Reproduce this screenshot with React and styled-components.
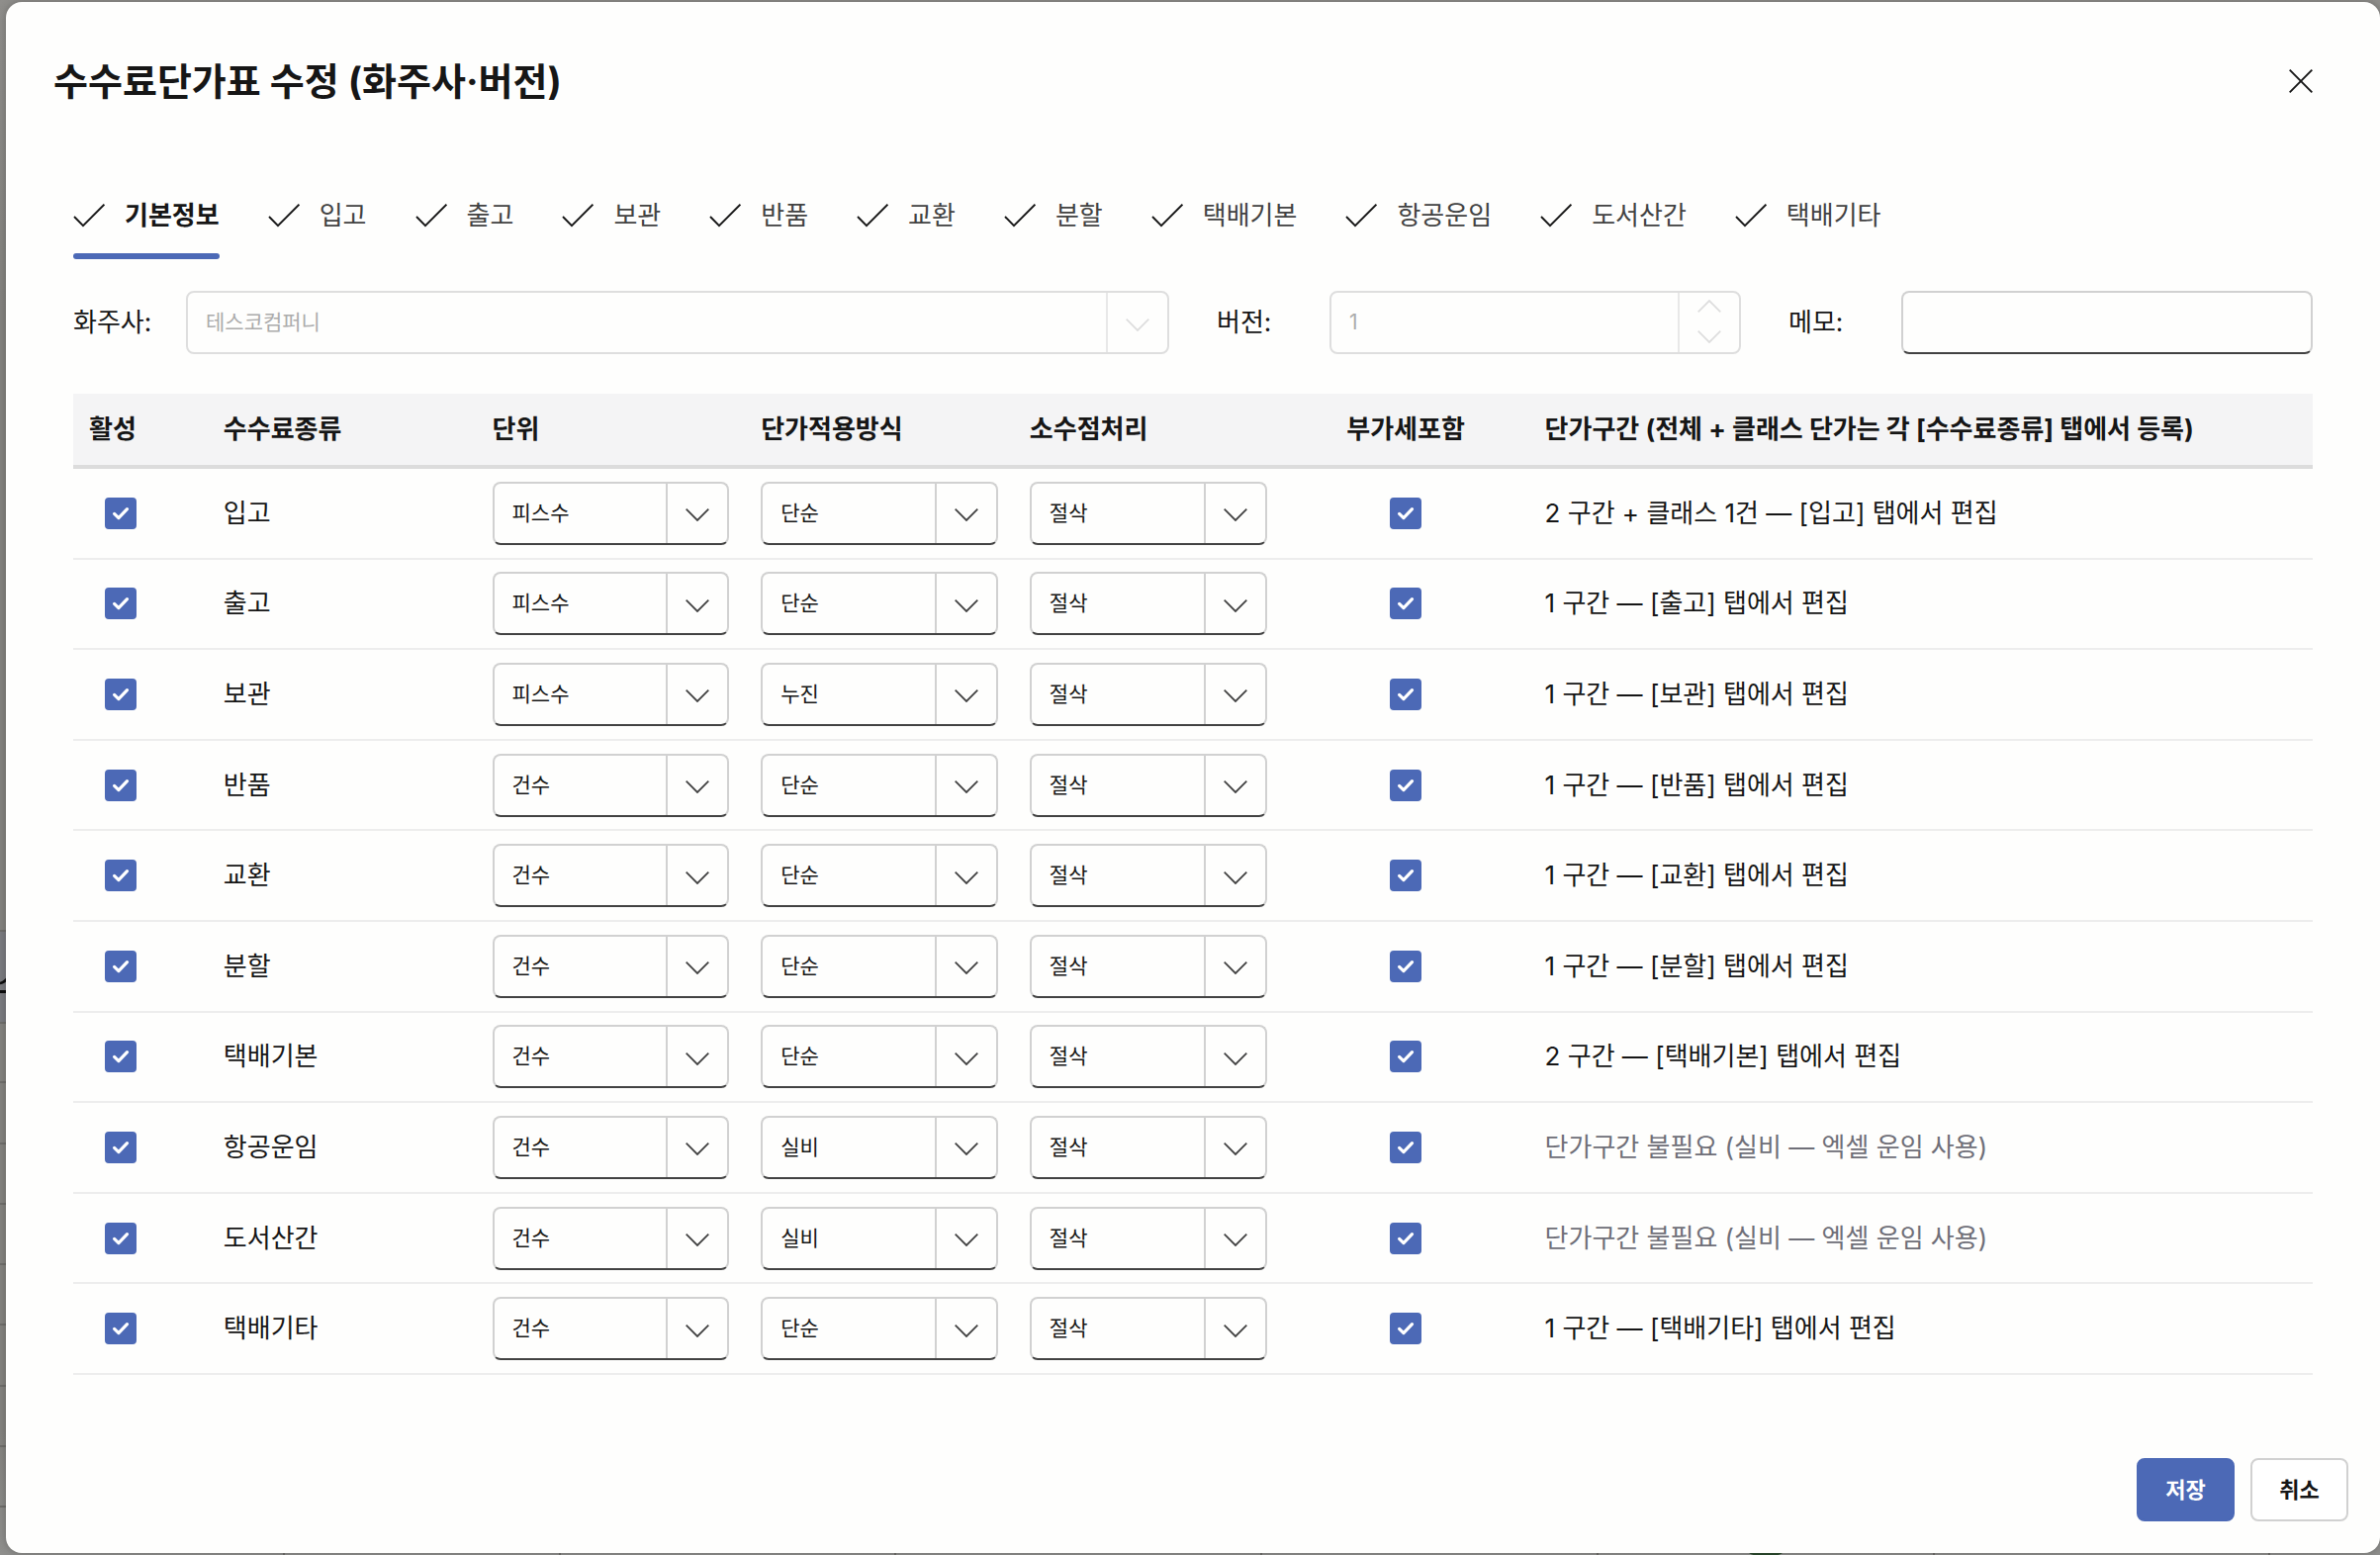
import React, { useState } from 'react';
import styled, { createGlobalStyle } from 'styled-components';

const GlobalStyle = createGlobalStyle`
    * {
        box-sizing: border-box;
    }
    body {
        margin: 0;
        background: #868583;
        color: #161616;
        font-family: Inter, 'Noto Sans CJK KR', sans-serif;
        font-size: 26px;
        line-height: 40px;
    }
    button, input, select {
        font: inherit;
        color: inherit;
        margin: 0;
    }
`;

const Backdrop = styled.div`
    position: relative;
    display: flex;
    min-height: 100vh;
    padding: 2px 0 2px 6px;
    background: linear-gradient(#8f8e8b, #84837f 20%, #84837f 92%, #8f8f8d);
`;

/* dimmed list page that shows around the edges of the dialog */
const BehindPage = styled.svg`
    position: absolute;
    inset: 0;
    width: 100%;
    height: 100%;
`;

const Dialog = styled.section`
    position: relative;
    flex: 1;
    min-width: 0;
    display: flex;
    flex-direction: column;
    border-radius: 16px;
    background: #fefefd;
    box-shadow: 0 0 8px rgba(0, 0, 0, 0.25);
`;

const Header = styled.header`
    display: flex;
    align-items: center;
    justify-content: space-between;
    padding: 48px 60px 0 48px;
`;

const Title = styled.h1`
    margin: 0;
    font-size: 38px;
    line-height: 64px;
    font-weight: 700;
`;

const IconButton = styled.button`
    display: flex;
    padding: 8px;
    border: 0;
    background: none;
    cursor: pointer;
`;

const Content = styled.div`
    flex: 1;
    display: flex;
    flex-direction: column;
    padding: 72px 68px 84px;
`;

const TabList = styled.div`
    display: flex;
    gap: 49px;
`;

const TabItem = styled.div`
    display: flex;
    flex-direction: column;
    &::after {
        content: '';
        height: 6px;
        border-radius: 3px;
        background: ${({ $active }) => ($active ? '#4c69b6' : 'transparent')};
    }
`;

const Tab = styled.button`
    display: flex;
    align-items: center;
    gap: 20px;
    height: 70px;
    padding: 0 0 6px;
    border: 0;
    background: none;
    color: ${({ $active }) => ($active ? '#161616' : '#424242')};
    font-weight: ${({ $active }) => ($active ? 700 : 400)};
    cursor: pointer;
`;

const Form = styled.div`
    display: grid;
    grid-template-columns: repeat(4, minmax(0, 1fr));
    gap: 48px;
    padding: 32px 0 40px;
`;

const Field = styled.div`
    grid-column: span ${({ $span }) => $span || 1};
    display: flex;
    align-items: center;
`;

const Label = styled.label`
    flex: 0 0 114px;
`;

const Box = styled.div`
    flex: 1;
    min-width: 0;
    display: grid;
    grid-template-columns: minmax(0, 1fr) 62px;
    height: 64px;
    border: 2px solid ${({ $disabled }) => ($disabled ? '#dedede' : '#d1d1d1')};
    border-bottom-color: ${({ $disabled }) => ($disabled ? '#dedede' : '#424242')};
    border-radius: 8px;
    overflow: hidden;
    font-size: 21px;
    color: ${({ $disabled }) => ($disabled ? '#acacac' : '#161616')};
`;

const Select = styled.select`
    grid-area: 1 / 1 / 2 / 3;
    appearance: none;
    width: 100%;
    padding: 0 80px 0 18px;
    border: 0;
    background: none;
    opacity: 1;
    outline-offset: -2px;
`;

const Addon = styled.span`
    grid-area: 1 / 2 / 2 / 3;
    display: flex;
    flex-direction: column;
    align-items: center;
    justify-content: center;
    gap: 18px;
    padding: ${({ $spinner }) => ($spinner ? '0 0 2px' : '4px 0 0')};
    border-left: 2px solid ${({ $disabled }) => ($disabled ? '#e8e8e8' : '#d1d1d1')};
    color: ${({ $disabled }) => ($disabled ? '#dedede' : '#424242')};
    pointer-events: none;
`;

const Input = styled.input`
    grid-column: ${({ $wide }) => ($wide ? '1 / 3' : '1 / 2')};
    width: 100%;
    padding: 0 18px;
    border: 0;
    background: none;
    outline-offset: -2px;
`;

const Table = styled.table`
    flex: 1;
    width: 100%;
    table-layout: fixed;
    border-collapse: separate;
    border-spacing: 0;
`;

const Th = styled.th`
    width: ${({ $width }) => $width};
    height: 76px;
    padding: 0 16px;
    border-bottom: 4px solid #dcdcdc;
    background: #f4f4f5;
    text-align: ${({ $center }) => ($center ? 'center' : 'left')};
    font-weight: 700;
    white-space: nowrap;
`;

const Td = styled.td`
    height: 91px;
    padding: 0 16px;
    border-bottom: 2px solid #ededed;
    color: ${({ $muted }) => ($muted ? '#6f6f78' : '#161616')};
`;

const CheckCell = styled(Td)`
    padding: 0 ${({ $center }) => ($center ? '16px' : '32px')};
    text-align: ${({ $center }) => ($center ? 'center' : 'left')};
`;

const CheckWrap = styled.label`
    display: grid;
    justify-content: ${({ $center }) => ($center ? 'center' : 'start')};
    color: #ffffff;
    & > * {
        grid-area: 1 / 1;
    }
    & > svg {
        pointer-events: none;
    }
`;

const CheckInput = styled.input`
    appearance: none;
    width: 32px;
    height: 32px;
    border: 2px solid #d1d1d1;
    border-radius: 4px;
    &:checked {
        border-color: #4c69b6;
        background: #4c69b6;
    }
`;

const Footer = styled.footer`
    display: flex;
    justify-content: flex-end;
    gap: 16px;
    padding: 0 32px 32px;
`;

const Button = styled.button`
    min-width: 99px;
    height: 64px;
    padding: 0 24px;
    border: 2px solid ${({ $primary }) => ($primary ? '#4c69b6' : '#d1d1d1')};
    border-radius: 8px;
    background: ${({ $primary }) => ($primary ? '#4c69b6' : '#ffffff')};
    color: ${({ $primary }) => ($primary ? '#ffffff' : '#161616')};
    font-size: 22px;
    font-weight: 700;
    cursor: pointer;
`;

const Chevron = ({ up }) => (
    <svg width='24' height='13' viewBox='0 0 24 13' fill='none' stroke='currentColor' strokeWidth='1.8'>
        <path d={up ? 'M.7 12.3 12 1l11.3 11.3' : 'M.7.7 12 12 23.3.7'} />
    </svg>
);

const TabCheck = () => (
    <svg width='32' height='24' viewBox='0 0 32 24' fill='none' stroke='#161616' strokeWidth='1.9'>
        <path d='M1 13l9 9.2L31.4.7' />
    </svg>
);

const tabs = ['기본정보', '입고', '출고', '보관', '반품', '교환', '분할', '택배기본', '항공운임', '도서산간', '택배기타'];

const rows = [
    { name: '입고', unit: '피스수', method: '단순', range: '2 구간 + 클래스 1건 — [입고] 탭에서 편집' },
    { name: '출고', unit: '피스수', method: '단순', range: '1 구간 — [출고] 탭에서 편집' },
    { name: '보관', unit: '피스수', method: '누진', range: '1 구간 — [보관] 탭에서 편집' },
    { name: '반품', unit: '건수', method: '단순', range: '1 구간 — [반품] 탭에서 편집' },
    { name: '교환', unit: '건수', method: '단순', range: '1 구간 — [교환] 탭에서 편집' },
    { name: '분할', unit: '건수', method: '단순', range: '1 구간 — [분할] 탭에서 편집' },
    { name: '택배기본', unit: '건수', method: '단순', range: '2 구간 — [택배기본] 탭에서 편집' },
    { name: '항공운임', unit: '건수', method: '실비', range: '단가구간 불필요 (실비 — 엑셀 운임 사용)', muted: true },
    { name: '도서산간', unit: '건수', method: '실비', range: '단가구간 불필요 (실비 — 엑셀 운임 사용)', muted: true },
    { name: '택배기타', unit: '건수', method: '단순', range: '1 구간 — [택배기타] 탭에서 편집' },
];

const rowLines = [940, 1033, 1093, 1155, 1216, 1277, 1338, 1400, 1461, 1522];
const columnLines = [286, 565, 904, 1274, 1614, 1954, 2293];

const Behind = () => (
    <BehindPage aria-hidden='true'>
        <rect y='941' width='8' height='92' fill='#7b7c80' />
        {rowLines.map((y) => (
            <rect key={y} y={y} width='8' height='2' fill='#6f6e6b' />
        ))}
        {columnLines.map((x) => (
            <rect key={x} x={x} y='1560' width='2' height='12' fill='#6f6e6b' />
        ))}
        <path d='M0 994q5-1 8-6' fill='none' stroke='#0c0c0c' strokeWidth='2.5' />
        <rect y='1001' width='8' height='3' fill='#0c0c0c' />
        <ellipse cx='1785' cy='1560' rx='24' ry='14' fill='#2a4a2c' />
    </BehindPage>
);

const Dropdown = ({ id, label, value, options, disabled }) => (
    <Box $disabled={disabled}>
        <Select id={id} aria-label={label} defaultValue={value} disabled={disabled}>
            {options.map((option) => (
                <option key={option}>{option}</option>
            ))}
        </Select>
        <Addon $disabled={disabled}>
            <Chevron />
        </Addon>
    </Box>
);

const Checkbox = ({ label, center }) => (
    <CheckWrap $center={center}>
        <CheckInput type='checkbox' aria-label={label} defaultChecked />
        <svg width='32' height='32' viewBox='0 0 32 32' fill='none' stroke='currentColor' strokeWidth='3.2' strokeLinecap='round' strokeLinejoin='round'>
            <path d='M9.6 16.4l4.3 4.2 8.6-9' />
        </svg>
    </CheckWrap>
);

const App = () => {
    const [active, setActive] = useState(tabs[0]);

    return (
        <>
            <GlobalStyle />
            <Backdrop>
                <Behind />
                <Dialog role='dialog' aria-labelledby='dialog-title'>
                    <Header>
                        <Title id='dialog-title'>수수료단가표 수정 (화주사·버전)</Title>
                        <IconButton aria-label='닫기'>
                            <svg width='24' height='24' viewBox='0 0 24 24' stroke='#161616' strokeWidth='1.9'>
                                <path d='M.7.7l22.6 22.6M23.3.7L.7 23.3' />
                            </svg>
                        </IconButton>
                    </Header>
                    <Content>
                        <TabList role='tablist'>
                            {tabs.map((tab) => (
                                <TabItem key={tab} $active={tab === active}>
                                    <Tab role='tab' aria-selected={tab === active} $active={tab === active} onClick={() => setActive(tab)}>
                                        <TabCheck />
                                        {tab}
                                    </Tab>
                                </TabItem>
                            ))}
                        </TabList>
                        <Form>
                            <Field $span={2}>
                                <Label htmlFor='company'>화주사:</Label>
                                <Dropdown id='company' value='테스코컴퍼니' options={['테스코컴퍼니']} disabled />
                            </Field>
                            <Field>
                                <Label htmlFor='version'>버전:</Label>
                                <Box $disabled>
                                    <Input id='version' defaultValue='1' disabled />
                                    <Addon $disabled $spinner>
                                        <Chevron up />
                                        <Chevron />
                                    </Addon>
                                </Box>
                            </Field>
                            <Field>
                                <Label htmlFor='memo'>메모:</Label>
                                <Box>
                                    <Input id='memo' $wide />
                                </Box>
                            </Field>
                        </Form>
                        <Table>
                            <thead>
                                <tr>
                                    <Th $width='6%'>활성</Th>
                                    <Th $width='12%'>수수료종류</Th>
                                    <Th $width='12%'>단위</Th>
                                    <Th $width='12%'>단가적용방식</Th>
                                    <Th $width='12%'>소수점처리</Th>
                                    <Th $width='11%' $center>부가세포함</Th>
                                    <Th $width='35%'>단가구간 (전체 + 클래스 단가는 각 [수수료종류] 탭에서 등록)</Th>
                                </tr>
                            </thead>
                            <tbody>
                                {rows.map(({ name, unit, method, range, muted }) => (
                                    <tr key={name}>
                                        <CheckCell>
                                            <Checkbox label={`${name} 활성`} />
                                        </CheckCell>
                                        <Td>{name}</Td>
                                        <Td>
                                            <Dropdown label={`${name} 단위`} value={unit} options={['피스수', '건수']} />
                                        </Td>
                                        <Td>
                                            <Dropdown label={`${name} 단가적용방식`} value={method} options={['단순', '누진', '실비']} />
                                        </Td>
                                        <Td>
                                            <Dropdown label={`${name} 소수점처리`} value='절삭' options={['절삭', '반올림', '올림']} />
                                        </Td>
                                        <CheckCell $center>
                                            <Checkbox label={`${name} 부가세포함`} center />
                                        </CheckCell>
                                        <Td $muted={muted}>{range}</Td>
                                    </tr>
                                ))}
                            </tbody>
                        </Table>
                    </Content>
                    <Footer>
                        <Button $primary>저장</Button>
                        <Button>취소</Button>
                    </Footer>
                </Dialog>
            </Backdrop>
        </>
    );
};

export default App;
